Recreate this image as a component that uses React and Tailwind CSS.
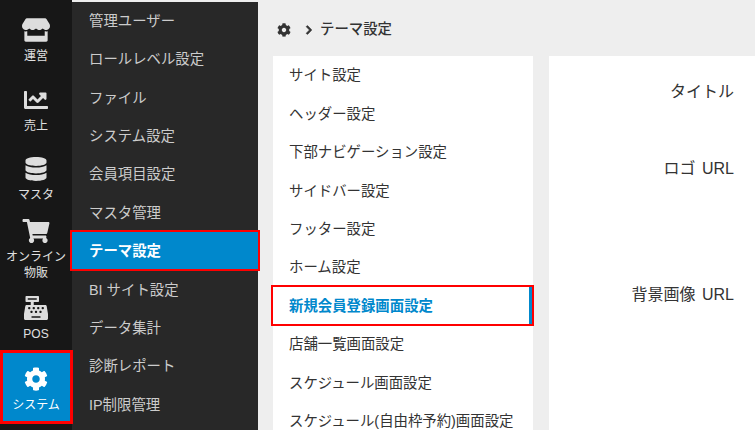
import { FaStore, FaChartLine, FaDatabase, FaShoppingCart, FaCashRegister, FaCog, FaChevronRight } from 'react-icons/fa';

const railItems = [
  { icon: FaStore, label: ['運営'], h: 'h-[70px]' },
  { icon: FaChartLine, label: ['売上'], h: 'h-[69px]' },
  { icon: FaDatabase, label: ['マスタ'], h: 'h-[70px]' },
  { icon: FaShoppingCart, label: ['オンライン', '物販'], h: 'h-[70px]' },
  { icon: FaCashRegister, label: ['POS'], h: 'h-[65px] pt-[3px]' },
];

const subItems = [
  '管理ユーザー',
  'ロールレベル設定',
  'ファイル',
  'システム設定',
  '会員項目設定',
  'マスタ管理',
  'テーマ設定',
  'BI サイト設定',
  'データ集計',
  '診断レポート',
  'IP制限管理',
];

const themeItems = [
  'サイト設定',
  'ヘッダー設定',
  '下部ナビゲーション設定',
  'サイドバー設定',
  'フッター設定',
  'ホーム設定',
  '新規会員登録画面設定',
  '店舗一覧画面設定',
  'スケジュール画面設定',
  'スケジュール(自由枠予約)画面設定',
];

export default function App() {
  return (
    <div className="flex h-[430px] w-[755px] overflow-hidden bg-[#eeeeee] font-['Liberation_Sans','Noto_Sans_CJK_JP',sans-serif]">
      <aside className="flex w-[72px] shrink-0 flex-col bg-[#171717] pt-[6px] text-[#e0e0e0]">
        {railItems.map(({ icon: Icon, label, h }) => (
          <div key={label[0]} className={`flex ${h} flex-col items-center justify-center text-center`}>
            <Icon className="h-6 w-7 text-[#dddddd]" />
            <span className="mt-[6px] text-xs leading-4">
              {label.map((line) => (
                <span key={line} className="block">{line}</span>
              ))}
            </span>
          </div>
        ))}
        <div className="relative flex h-[74px] flex-col items-center justify-center bg-[#0088cc] pt-[6px] text-white">
          <FaCog className="h-6 w-6" />
          <span className="mt-[6px] text-xs leading-4">システム</span>
          <div className="absolute inset-0 -right-px border-[3px] border-[#ff0000]" />
        </div>
      </aside>

      <nav className="mt-[2px] flex w-[186px] shrink-0 flex-col bg-[#282828] pt-px text-[14.4px] text-[#cccccc]">
        {subItems.map((item, i) => (
          <div
            key={item}
            className={
              i === 0
                ? 'flex h-[36.4px] shrink-0 items-center pl-[17px] pt-px'
                : i === 6
                  ? 'relative flex h-[38.4px] shrink-0 items-center bg-[#0088cc] pl-[17px] pt-[2px] font-bold text-white'
                  : 'flex h-[38.4px] shrink-0 items-center pl-[17px] pt-[3px]'
            }
          >
            {item}
            {i === 6 && <div className="absolute -inset-x-[2px] -inset-y-px border-[2px] border-[#ff0000]" />}
          </div>
        ))}
      </nav>

      <main className="flex min-w-0 flex-1 flex-col">
        <div className="flex h-[56px] shrink-0 items-center pl-[19px] pt-[3px] text-[14.4px] font-medium text-[#333333]">
          <FaCog className="h-[14px] w-[14px]" />
          <FaChevronRight className="ml-[13px] h-[10px] w-[10px] stroke-current stroke-[40]" />
          <span className="ml-[6px]">テーマ設定</span>
        </div>
        <div className="flex flex-1 gap-4 pl-[15px]">
          <ul className="h-[400px] w-[260px] shrink-0 bg-white text-[14.4px] text-[#333333]">
            {themeItems.map((item, i) => (
              <li
                key={item}
                className={
                  i === 6
                    ? 'relative flex h-[38.4px] items-center border-r-4 border-[#0088cc] pl-4 pt-[2px] font-semibold text-[#0088cc]'
                    : 'flex h-[38.4px] items-center whitespace-nowrap pl-4 pt-[2px]'
                }
              >
                {item}
                {i === 6 && <div className="absolute -inset-x-[2px] -right-[5px] -inset-y-px border-[2px] border-[#ff0000]" />}
              </li>
            ))}
          </ul>
          <section className="flex flex-1 flex-col items-end bg-white pr-[21px] pt-[24px] text-right text-base leading-6 text-[#333333] [word-spacing:2px]">
            <div className="h-[77px]">タイトル</div>
            <div className="h-[126px]">ロゴ URL</div>
            <div>背景画像 URL</div>
          </section>
        </div>
      </main>
    </div>
  );
}
